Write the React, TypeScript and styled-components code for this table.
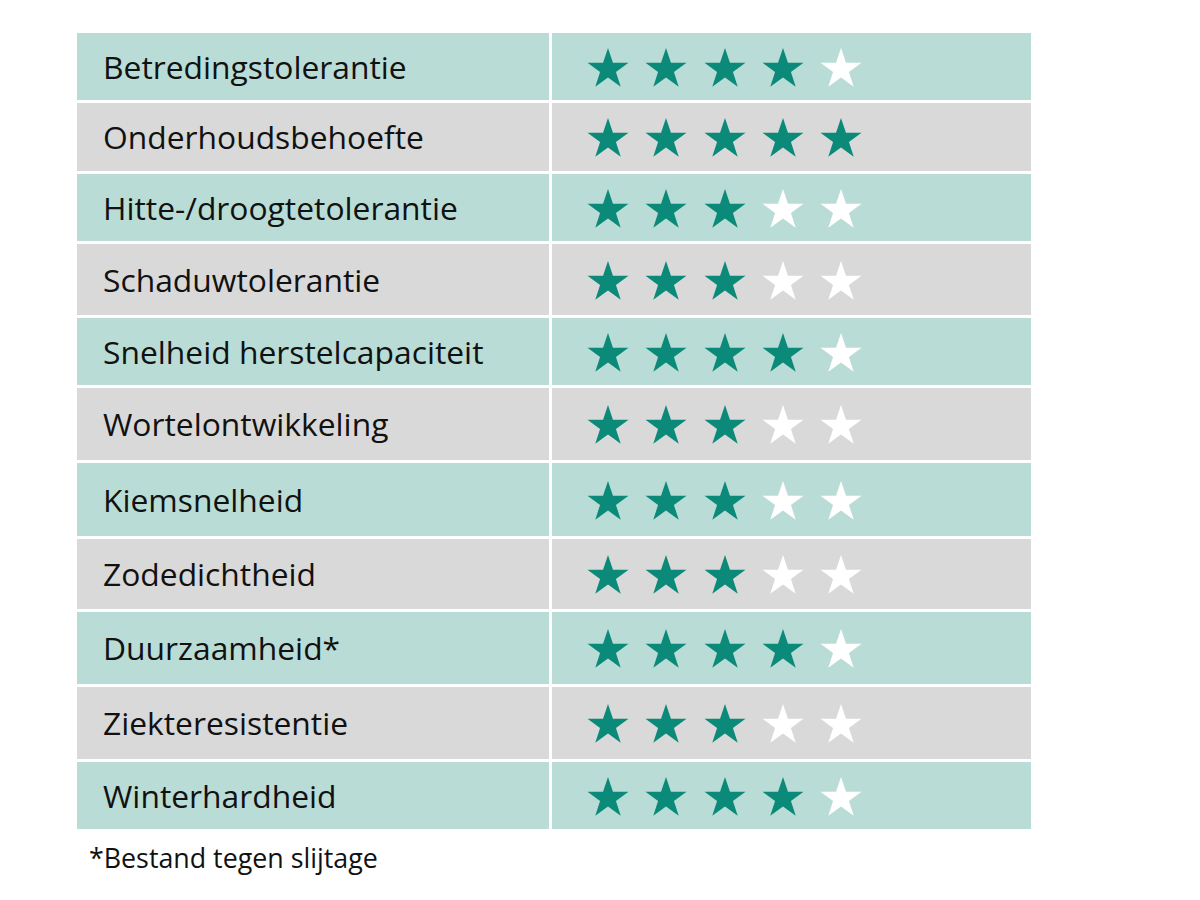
import styled, { createGlobalStyle } from "styled-components";

interface Trait {
  label: string;
  score: number;
}

const traits: Trait[] = [
  { label: "Betredingstolerantie", score: 4 },
  { label: "Onderhoudsbehoefte", score: 5 },
  { label: "Hitte-/droogtetolerantie", score: 3 },
  { label: "Schaduwtolerantie", score: 3 },
  { label: "Snelheid herstelcapaciteit", score: 4 },
  { label: "Wortelontwikkeling", score: 3 },
  { label: "Kiemsnelheid", score: 3 },
  { label: "Zodedichtheid", score: 3 },
  { label: "Duurzaamheid*", score: 4 },
  { label: "Ziekteresistentie", score: 3 },
  { label: "Winterhardheid", score: 4 },
];

const GlobalStyle = createGlobalStyle`
  html, body {
    margin: 0;
    background: #ffffff;
    font-family: "Open Sans", "Noto Sans", sans-serif;
    color: #111111;
  }
`;

const Page = styled.div`
  padding: 33px 0 0 77px;
`;

// rows in the source are not all the same height
const Table = styled.div`
  width: 954px;
  display: grid;
  grid-template-columns: 472px 479px;
  grid-template-rows: 67px 68px 67px 71px 67px 72px 73px 70px 72px 72px 67px;
  column-gap: 3px;
  row-gap: 3px;
`;

const Cell = styled.div<{ $alt: boolean }>`
  background: ${(p) => (p.$alt ? "#d9d9d9" : "#badcd6")};
  display: flex;
  align-items: center;
`;

const Label = styled(Cell)`
  padding-left: 26px;
  font-size: 31.8px;
  padding-bottom: 1px;
`;

const Stars = styled(Cell)`
  padding-left: 35px;
  gap: 16.3px;
`;

const Star = styled.svg<{ $on: boolean }>`
  width: 42px;
  height: 40px;
  margin-top: 2px;
  fill: ${(p) => (p.$on ? "#0b8a79" : "#ffffff")};
`;

const Note = styled.div`
  margin: 10px 0 0 12px;
  font-size: 26.8px;
`;

function Rating({ score, alt }: { score: number; alt: boolean }) {
  return (
    <Stars $alt={alt}>
      {[1, 2, 3, 4, 5].map((n) => (
        <Star key={n} $on={n <= score} viewBox="0 0 100 95">
          <polygon points="50,0 61.8,35.1 98.9,35.1 68.9,56.8 80.3,91.9 50,70.2 19.7,91.9 31.1,56.8 1.1,35.1 38.2,35.1" />
        </Star>
      ))}
    </Stars>
  );
}

export default function App() {
  return (
    <Page>
      <GlobalStyle />
      <Table>
        {traits.map((t, i) => (
          <>
            <Label key={t.label} $alt={i % 2 === 1}>
              {t.label}
            </Label>
            <Rating key={t.label + "-r"} score={t.score} alt={i % 2 === 1} />
          </>
        ))}
      </Table>
      <Note>*Bestand tegen slijtage</Note>
    </Page>
  );
}
